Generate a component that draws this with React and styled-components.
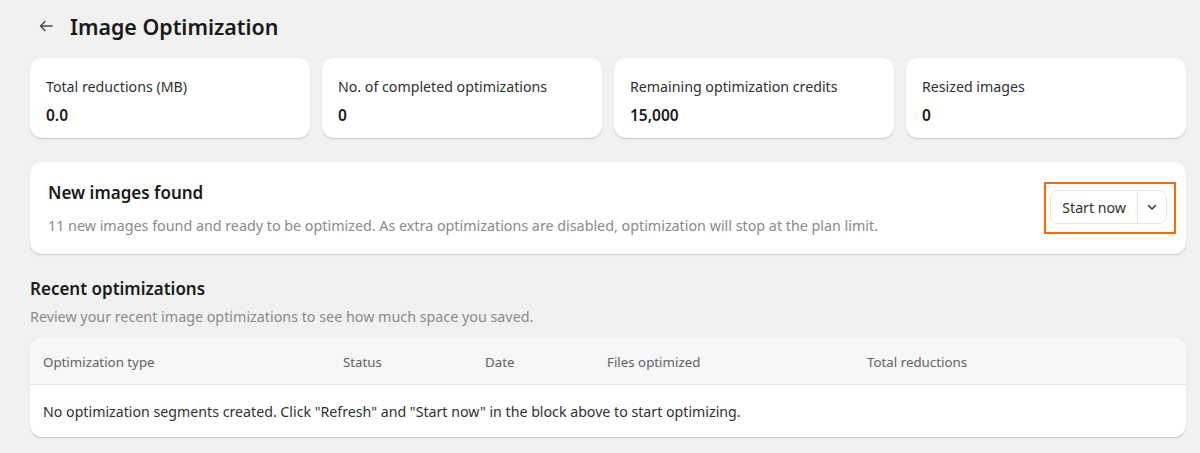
import React from 'react';
import styled, { createGlobalStyle } from 'styled-components';

const GlobalStyle = createGlobalStyle`
  html, body {
    margin: 0;
    padding: 0;
    background: #f1f1f1;
  }
  body {
    font-family: "Noto Sans", "Open Sans", sans-serif;
    color: #303030;
  }
`;

const Page = styled.div`
  padding: 10px 14px 16px 30px;
  display: flex;
  flex-direction: column;
`;

const Header = styled.div`
  display: flex;
  align-items: center;
  gap: 14px;
  height: 32px;
  padding-left: 6px;
  margin-bottom: 16px;
`;

const BackButton = styled.button`
  border: none;
  background: none;
  padding: 0;
  width: 20px;
  height: 20px;
  display: flex;
  align-items: center;
  justify-content: center;
  color: #4a4a4a;
  cursor: pointer;
`;

const Title = styled.h1`
  margin: 0;
  font-size: 21.4px;
  font-weight: 600;
  color: #1a1a1a;
`;

const StatsRow = styled.div`
  display: grid;
  grid-template-columns: repeat(4, 1fr);
  gap: 12px;
  margin-bottom: 24px;
`;

const Card = styled.div`
  background: #fff;
  border-radius: 12px;
  box-shadow: 0 1px 0 rgba(26, 26, 26, 0.07), 0 1px 2px rgba(0, 0, 0, 0.12);
`;

const StatCard = styled(Card)`
  height: 80px;
  box-sizing: border-box;
  padding: 19px 16px 0;
`;

const StatLabel = styled.div`
  font-size: 14.2px;
  color: #303030;
  line-height: 20px;
`;

const StatValue = styled.div`
  margin-top: 8px;
  font-size: 15.5px;
  font-weight: 600;
  color: #1a1a1a;
  line-height: 20px;
`;

const Banner = styled(Card)`
  display: flex;
  align-items: center;
  justify-content: space-between;
  height: 92px;
  box-sizing: border-box;
  padding: 0 10px 0 18px;
  margin-bottom: 23px;
`;

const BannerText = styled.div`
  display: flex;
  flex-direction: column;
  gap: 12px;
  padding-top: 2px;
`;

const SectionTitle = styled.h2`
  margin: 0;
  font-size: 17px;
  font-weight: 600;
  color: #1a1a1a;
  line-height: 22px;
`;

const Muted = styled.p`
  margin: 0;
  font-size: 14.3px;
  color: #8a8a8a;
  line-height: 20px;
`;

const Highlight = styled.div`
  border: 2px solid #ff6a00;
  padding: 6px 7px 8px 4px;
  display: flex;
`;

const SplitButton = styled.div`
  display: flex;
  height: 34px;
  box-sizing: border-box;
  border: 1px solid #e6e6e6;
  border-radius: 8px;
  background: #fff;
  overflow: hidden;
`;

const ButtonPart = styled.button`
  border: none;
  background: none;
  font-family: inherit;
  font-size: 14.2px;
  color: #303030;
  padding: ${(p) => (p.$icon ? '0 8px' : '0 11px')};
  display: flex;
  align-items: center;
  border-left: ${(p) => (p.$icon ? '1px solid #e6e6e6' : 'none')};
  cursor: pointer;
`;

const Section = styled.div`
  display: flex;
  flex-direction: column;
  gap: 7px;
  padding-top: 1px;
  margin-bottom: 11px;
`;

const Table = styled(Card)`
  overflow: hidden;
`;

const HeadRow = styled.div`
  display: grid;
  grid-template-columns: 300px 142px 122px 260px 1fr;
  align-items: center;
  height: 47px;
  padding: 1px 0 0 13px;
  box-sizing: border-box;
  background: #f7f7f7;
  border-bottom: 1px solid #e3e3e3;
`;

const HeadCell = styled.div`
  font-size: 13.3px;
  color: #616161;
`;

const EmptyRow = styled.div`
  height: 52px;
  display: flex;
  align-items: center;
  padding: 1px 0 0 13px;
  box-sizing: border-box;
  font-size: 14.2px;
  color: #303030;
`;

const stats = [
  { label: 'Total reductions (MB)', value: '0.0' },
  { label: 'No. of completed optimizations', value: '0' },
  { label: 'Remaining optimization credits', value: '15,000' },
  { label: 'Resized images', value: '0' },
];

const columns = ['Optimization type', 'Status', 'Date', 'Files optimized', 'Total reductions'];

const App = () => {
  return (
    <>
      <GlobalStyle />
      <Page>
        <Header>
          <BackButton aria-label="Back">
            <svg width="16" height="16" viewBox="0 0 16 16" fill="none">
              <path d="M14 8H2.5M7 3.5L2.5 8L7 12.5" stroke="currentColor" strokeWidth="1.5" strokeLinecap="round" strokeLinejoin="round" />
            </svg>
          </BackButton>
          <Title>Image Optimization</Title>
        </Header>

        <StatsRow>
          {stats.map((s) => (
            <StatCard key={s.label}>
              <StatLabel>{s.label}</StatLabel>
              <StatValue>{s.value}</StatValue>
            </StatCard>
          ))}
        </StatsRow>

        <Banner>
          <BannerText>
            <SectionTitle>New images found</SectionTitle>
            <Muted>
              11 new images found and ready to be optimized. As extra optimizations are disabled, optimization will stop at the plan limit.
            </Muted>
          </BannerText>
          <Highlight>
            <SplitButton>
              <ButtonPart>Start now</ButtonPart>
              <ButtonPart $icon aria-label="More options">
                <svg width="12" height="12" viewBox="0 0 12 12" fill="none">
                  <path d="M2.5 4.5L6 8L9.5 4.5" stroke="#303030" strokeWidth="1.5" strokeLinecap="round" strokeLinejoin="round" />
                </svg>
              </ButtonPart>
            </SplitButton>
          </Highlight>
        </Banner>

        <Section>
          <SectionTitle>Recent optimizations</SectionTitle>
          <Muted>Review your recent image optimizations to see how much space you saved.</Muted>
        </Section>

        <Table>
          <HeadRow>
            {columns.map((c) => (
              <HeadCell key={c}>{c}</HeadCell>
            ))}
          </HeadRow>
          <EmptyRow>
            No optimization segments created. Click "Refresh" and "Start now" in the block above to start optimizing.
          </EmptyRow>
        </Table>
      </Page>
    </>
  );
};

export default App;
